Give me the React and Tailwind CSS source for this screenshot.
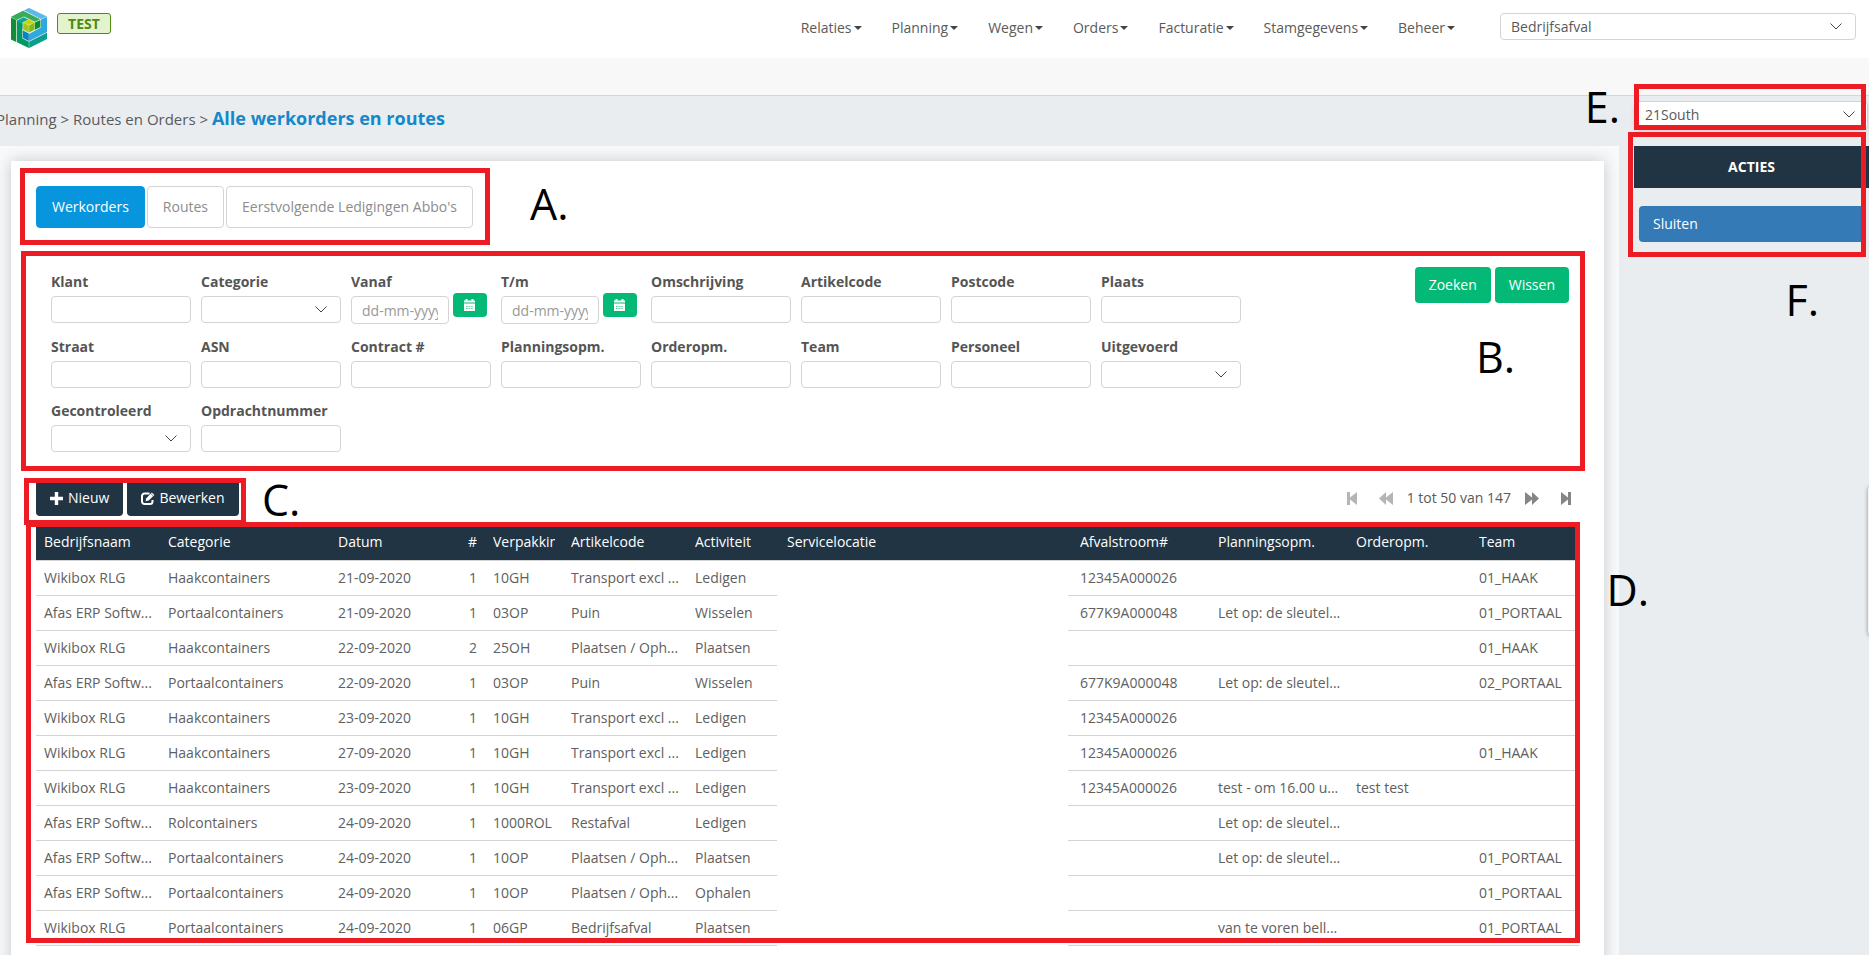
import React, { useState } from 'react';

const navItems = ['Relaties', 'Planning', 'Wegen', 'Orders', 'Facturatie', 'Stamgegevens', 'Beheer'];

const tabs = ['Werkorders', 'Routes', "Eerstvolgende Ledigingen Abbo's"];

const filterFields = [
  { id: 'klant', label: 'Klant' },
  { id: 'categorie', label: 'Categorie', type: 'select' },
  { id: 'vanaf', label: 'Vanaf', type: 'date' },
  { id: 'tm', label: 'T/m', type: 'date' },
  { id: 'omschrijving', label: 'Omschrijving' },
  { id: 'artikelcode', label: 'Artikelcode' },
  { id: 'postcode', label: 'Postcode' },
  { id: 'plaats', label: 'Plaats' },
  { id: 'straat', label: 'Straat' },
  { id: 'asn', label: 'ASN' },
  { id: 'contract', label: 'Contract #' },
  { id: 'planningsopm', label: 'Planningsopm.' },
  { id: 'orderopm', label: 'Orderopm.' },
  { id: 'team', label: 'Team' },
  { id: 'personeel', label: 'Personeel' },
  { id: 'uitgevoerd', label: 'Uitgevoerd', type: 'select' },
  { id: 'gecontroleerd', label: 'Gecontroleerd', type: 'select' },
  { id: 'opdrachtnummer', label: 'Opdrachtnummer' }
];

const columns = [
  { label: 'Bedrijfsnaam', width: 'w-[124px]', cell: 'px-2' },
  { label: 'Categorie', width: 'w-[170px]', cell: 'px-2' },
  { label: 'Datum', width: 'w-[120px]', cell: 'px-2' },
  { label: '#', width: 'w-[35px]', cell: 'px-2 text-right' },
  { label: 'Verpakking', width: 'w-[78px]', cell: 'px-2' },
  { label: 'Artikelcode', width: 'w-[124px]', cell: 'px-2' },
  { label: 'Activiteit', width: 'w-[90px]', cell: 'px-2' },
  { label: 'Servicelocatie', width: '', cell: 'px-2.5', blank: true },
  { label: 'Afvalstroom#', width: 'w-[142px]', cell: 'pl-3 pr-2' },
  { label: 'Planningsopm.', width: 'w-[138px]', cell: 'px-2' },
  { label: 'Orderopm.', width: 'w-[123px]', cell: 'px-2' },
  { label: 'Team', width: 'w-[108px]', cell: 'px-2' }
];

const rows = [
  ['Wikibox RLG', 'Haakcontainers', '21-09-2020', '1', '10GH', 'Transport excl ...', 'Ledigen', '', '12345A000026', '', '', '01_HAAK'],
  ['Afas ERP Softw...', 'Portaalcontainers', '21-09-2020', '1', '03OP', 'Puin', 'Wisselen', '', '677K9A000048', 'Let op: de sleutel...', '', '01_PORTAAL'],
  ['Wikibox RLG', 'Haakcontainers', '22-09-2020', '2', '25OH', 'Plaatsen / Oph...', 'Plaatsen', '', '', '', '', '01_HAAK'],
  ['Afas ERP Softw...', 'Portaalcontainers', '22-09-2020', '1', '03OP', 'Puin', 'Wisselen', '', '677K9A000048', 'Let op: de sleutel...', '', '02_PORTAAL'],
  ['Wikibox RLG', 'Haakcontainers', '23-09-2020', '1', '10GH', 'Transport excl ...', 'Ledigen', '', '12345A000026', '', '', ''],
  ['Wikibox RLG', 'Haakcontainers', '27-09-2020', '1', '10GH', 'Transport excl ...', 'Ledigen', '', '12345A000026', '', '', '01_HAAK'],
  ['Wikibox RLG', 'Haakcontainers', '23-09-2020', '1', '10GH', 'Transport excl ...', 'Ledigen', '', '12345A000026', 'test - om 16.00 u...', 'test test', ''],
  ['Afas ERP Softw...', 'Rolcontainers', '24-09-2020', '1', '1000ROL', 'Restafval', 'Ledigen', '', '', 'Let op: de sleutel...', '', ''],
  ['Afas ERP Softw...', 'Portaalcontainers', '24-09-2020', '1', '10OP', 'Plaatsen / Oph...', 'Plaatsen', '', '', 'Let op: de sleutel...', '', '01_PORTAAL'],
  ['Afas ERP Softw...', 'Portaalcontainers', '24-09-2020', '1', '10OP', 'Plaatsen / Oph...', 'Ophalen', '', '', '', '', '01_PORTAAL'],
  ['Wikibox RLG', 'Portaalcontainers', '24-09-2020', '1', '06GP', 'Bedrijfsafval', 'Plaatsen', '', '', 'van te voren bell...', '', '01_PORTAAL']
];

// Frames and letters that the manual text refers to
const frames = [
  'left-[20px] top-[168px] w-[470px] h-[77px]',
  'left-[21px] right-[284px] top-[251px] h-[220px]',
  'left-[24px] top-[478px] w-[222px] h-[47px]',
  'left-[26px] right-[289px] top-[522px] h-[421px]',
  'right-[3px] top-[84px] w-[232px] h-[46px]',
  'right-[3px] top-[132px] w-[238px] h-[125px]'
];

const letters = [
  { text: 'A.', pos: 'left-[530px] top-[184px]' },
  { text: 'B.', pos: 'right-[354px] top-[337px]' },
  { text: 'C.', pos: 'left-[262px] top-[480px]' },
  { text: 'D.', pos: 'right-[220px] top-[570px]' },
  { text: 'E.', pos: 'right-[249px] top-[87px]' },
  { text: 'F.', pos: 'right-[50px] top-[280px]' }
];

function Logo() {
  return (
    <svg viewBox="0 0 36 40" className="w-9 h-10" aria-hidden="true">
      <polygon points="18,0 36,9 36,31 18,40 0,31 0,9" fill="#d9f0e6" />
      <polygon points="13,2.2 18,0 36,8.5 30,11" fill="#5cb8ea" />
      <polygon points="36,9 36,24 18,33 18,26 30,19.5 30,11.6" fill="#2fa8e0" />
      <polygon points="0,8.8 12,2.8 29.2,11.2 24,13.8 13,8.6 5.4,12" fill="#3aab5b" />
      <polygon points="24,14.4 29.4,11.9 29.4,19 24,21.8" fill="#0c8b2f" />
      <polygon points="0,9.4 5.2,12 5.2,34 0,31.4" fill="#148c37" />
      <polygon points="6,12.4 12.6,9.2 17.4,11.6 11.4,14.6 11.4,20 6,17" fill="#10a596" />
      <polygon points="6,13 11.4,15.4 11.4,30.4 17.8,33.8 17.8,40 6,34.2" fill="#009a62" />
      <polygon points="18.2,33.8 36,24.8 36,31 18.2,40" fill="#0a9f8c" />
      <polygon points="18,11.4 23.4,14.2 18,17 12.4,14.2" fill="#c9d400" />
      <polygon points="12.2,14.6 17.8,17.4 17.8,24.6 12.2,21.6" fill="#a4c712" />
      <polygon points="18.2,17.4 23.6,14.6 23.6,21.6 18.2,24.6" fill="#83b81a" />
      <polygon points="12,22.4 17.8,25.4 17.8,33 12,30" fill="#0b83cc" />
    </svg>
  );
}

function Chevron({ className }) {
  return (
    <svg viewBox="0 0 12 7" className={`pointer-events-none absolute w-3 h-[7px] ${className}`} fill="none" stroke="#444" aria-hidden="true">
      <path d="M0.5 0.5 L6 6 L11.5 0.5" />
    </svg>
  );
}

function PlusIcon() {
  return (
    <svg viewBox="0 0 13 13" className="w-[13px] h-[13px]" fill="currentColor" aria-hidden="true">
      <path d="M4.800 0h3.400v4.800H13v3.400H8.200V13H4.800V8.200H0V4.800h4.800z" />
    </svg>
  );
}

function EditIcon() {
  return (
    <svg viewBox="0 0 14 13" className="w-3.5 h-[13px]" fill="none" aria-hidden="true">
      <path d="M8.5 1.5H3.500A2.500 2.500 0 0 0 1 4v5.500a2.500 2.500 0 0 0 2.500 2.500h5.500a2.500 2.500 0 0 0 2.500-2.500V8" stroke="currentColor" strokeWidth="2" />
      <path d="M4.600 9.200l.7-3L10.800.6l2.600 2.300-5.700 5.600z" fill="currentColor" />
      <path d="M9.800 1.600l2.500 2.300" stroke="#203444" strokeWidth=".6" />
    </svg>
  );
}

function CalendarIcon() {
  return (
    <svg viewBox="0 0 11 12" className="w-[11px] h-3" fill="currentColor" aria-hidden="true">
      <path d="M0 1.500h1.500V0h2v1.500h4V0h2v1.500H11V3.500H0z" />
      <path d="M0 4.500h11V12H0z" />
      <path d="M2 7.500h7M2 9.500h7" stroke="#04b976" strokeWidth=".7" strokeDasharray="1 .6" />
    </svg>
  );
}

function PagerButton({ label, path, className }) {
  return (
    <button aria-label={label} className={`flex w-3.5 justify-center ${className}`}>
      <svg viewBox="0 0 14 13" className="w-3.5 h-[13px]" fill="currentColor" aria-hidden="true">
        <path d={path} />
      </svg>
    </button>
  );
}

function FilterField({ field }) {
  const box = 'h-[27px] rounded border border-[#d4d4d4] bg-white text-sm text-[#555]';

  return (
    <div className="w-[140px]">
      <label htmlFor={field.id} className="block h-5 text-sm leading-5 font-bold text-[#555] whitespace-nowrap">
        {field.label}
      </label>
      {field.type === 'select' && (
        <div className="relative mt-1">
          <select id={field.id} className={`${box} w-full appearance-none px-2`}>
            <option value=""></option>
          </select>
          <Chevron className="right-[14px] top-[10px]" />
        </div>
      )}
      {field.type === 'date' && (
        <div className="mt-1 flex items-start gap-1">
          <input
            id={field.id}
            type="text"
            placeholder="dd-mm-yyyy"
            className="h-7 w-[98px] rounded border border-[#d4d4d4] bg-white px-2.5 text-sm placeholder:text-[#999]"
          />
          <button
            aria-label={`Kies datum ${field.label}`}
            className="-mt-[3px] flex h-6 w-[34px] items-center justify-center rounded bg-[#04b976] pr-0.5 text-white"
          >
            <CalendarIcon />
          </button>
        </div>
      )}
      {!field.type && <input id={field.id} type="text" className={`${box} mt-1 block w-full px-2`} />}
    </div>
  );
}

function WorkOrderTable() {
  return (
    <table className="w-full table-fixed text-sm text-[#606060]">
      <thead>
        <tr className="h-9 border-b border-[#d4d4d4] bg-[#203444] text-white">
          {columns.map(col => (
            <th key={col.label} className={`${col.width} ${col.cell} text-left font-normal`}>
              <div className="overflow-hidden whitespace-nowrap">{col.label}</div>
            </th>
          ))}
        </tr>
      </thead>
      <tbody>
        {rows.map((row, i) => (
          <tr key={i} className="h-[35px]">
            {row.map((value, j) => (
              <td key={j} className={`${columns[j].cell} ${columns[j].blank ? '' : 'border-b border-[#d4d4d4]'}`}>
                <div className="overflow-hidden whitespace-nowrap">{value}</div>
              </td>
            ))}
          </tr>
        ))}
      </tbody>
    </table>
  );
}

export default function App() {
  const [activeTab, setActiveTab] = useState('Werkorders');

  return (
    <div className="relative flex h-screen flex-col overflow-hidden bg-white pb-1 font-['Open_Sans',sans-serif] text-sm text-[#5a5a5a]">
      {/* Header */}
      <header className="flex h-[58px] shrink-0 items-start pl-[11px] pr-[13px]">
        <div className="pt-2">
          <Logo />
        </div>
        <span className="ml-2.5 mt-[13px] flex h-[21px] w-[54px] items-center justify-center rounded-[3px] border border-[#4f8a10] bg-[#e3f3cd] text-sm font-bold text-[#4f8a10]">
          TEST
        </span>
        <nav className="ml-auto flex pt-[18px]">
          {navItems.map(item => (
            <a key={item} href="#" className="flex items-center gap-0.5 px-[15px] leading-5">
              {item}
              <svg viewBox="0 0 8 4" className="w-2 h-1" fill="#444" aria-hidden="true">
                <path d="M0 0h8L4 4z" />
              </svg>
            </a>
          ))}
        </nav>
        <div className="relative ml-[30px] mt-[13px] w-[356px]">
          <select aria-label="Administratie" className="block h-[27px] w-full appearance-none rounded border border-[#d4d4d4] bg-white px-2.5 text-sm">
            <option>Bedrijfsafval</option>
          </select>
          <Chevron className="right-[14px] top-[10px]" />
        </div>
      </header>
      <div className="h-[38px] shrink-0 border-b border-[#d3d6d8] bg-[#f8f8f8]" />

      {/* Breadcrumb */}
      <div className="flex h-[50px] shrink-0 bg-[#e9edf0]">
        <div className="-ml-1 flex-1 pt-2 text-[15px] leading-7 whitespace-nowrap">
          <a href="#">Planning</a> &gt; <a href="#">Routes en Orders</a> &gt;{' '}
          <strong className="text-lg leading-7 font-bold text-[#1588cc]">Alle werkorders en routes</strong>
        </div>
        <div className="relative mt-[5px] w-[235px] pr-px">
          <select aria-label="Locatie" className="block h-7 w-full appearance-none rounded border border-[#d4d4d4] bg-white px-2.5 text-sm shadow-md">
            <option>21South</option>
          </select>
          <Chevron className="right-[14px] top-[10px]" />
        </div>
      </div>

      <div className="flex min-h-0 flex-1">
        <main className="min-w-0 flex-1 overflow-hidden bg-[#f8f9fb] pl-[11px] pr-[15px] pt-[15px]">
          <div className="min-h-full bg-white pb-10 pl-[25px] pr-[25px] pt-[25px] shadow-[0_0_15px_rgba(0,0,0,0.2)]">
            {/* Tabs */}
            <div className="flex gap-0.5">
              {tabs.map(tab => (
                <button
                  key={tab}
                  onClick={() => setActiveTab(tab)}
                  className={`h-[42px] rounded border px-[15px] text-sm whitespace-nowrap ${
                    activeTab === tab
                      ? 'border-[#0796dd] bg-[#0796dd] font-medium text-white'
                      : 'border-[#d4d4d4] bg-white text-[#8c8c8c]'
                  }`}
                >
                  {tab}
                </button>
              ))}
            </div>

            {/* Filters */}
            <form className="mt-[39px] flex items-start justify-between pl-[15px] pr-[10px]" onSubmit={e => e.preventDefault()}>
              <div className="mt-[5px] grid grid-cols-[repeat(8,140px)] gap-x-2.5 gap-y-[13px]">
                {filterFields.map(field => (
                  <FilterField key={field.id} field={field} />
                ))}
              </div>
              <div className="flex gap-1">
                <button type="submit" className="h-9 rounded bg-[#04b976] px-3.5 text-white">Zoeken</button>
                <button type="reset" className="h-9 rounded bg-[#04b976] px-3.5 text-white">Wissen</button>
              </div>
            </form>

            {/* Toolbar */}
            <div className="mt-7 flex items-center justify-between pr-1.5">
              <div className="flex gap-1">
                <button className="flex h-9 items-center gap-[5px] rounded bg-[#203444] px-3.5 text-white">
                  <PlusIcon /> Nieuw
                </button>
                <button className="flex h-9 items-center gap-1 rounded bg-[#203444] px-3.5 text-white">
                  <EditIcon /> Bewerken
                </button>
              </div>
              <div className="flex items-center">
                <PagerButton label="Eerste" path="M2 0h3v5.500L12 0v13L5 7.500V13H2z" className="mr-5 text-[#b5b5b5]" />
                <PagerButton label="Vorige" path="M0 6.500L7 0v5.500L14 0v13L7 7.500V13z" className="mr-3.5 text-[#b5b5b5]" />
                <span>1 tot 50 van 147</span>
                <PagerButton label="Volgende" path="M14 6.500L7 0v5.500L0 0v13l7-5.500V13z" className="ml-3.5 text-[#858585]" />
                <PagerButton label="Laatste" path="M12 0H9v5.500L2 0v13l7-5.500V13h3z" className="ml-5 text-[#858585]" />
              </div>
            </div>

            <div className="mt-2">
              <WorkOrderTable />
            </div>
          </div>
        </main>

        {/* Actions */}
        <aside className="w-[250px] shrink-0 bg-[#e9edf0] pl-[15px]">
          <h2 className="flex h-[42px] items-center justify-center bg-[#203444] text-sm font-bold text-white">ACTIES</h2>
          <div className="mt-[18px] pl-[5px] pr-1">
            <button className="h-9 w-full rounded bg-[#337ab7] px-3.5 text-left text-white">Sluiten</button>
          </div>
        </aside>
      </div>

      <div className="absolute -right-3 top-[486px] h-[149px] w-[13px] rounded bg-[#f4f4f4] shadow-[0_1px_4px_rgba(0,0,0,0.4)]" />

      {/* Annotations */}
      {frames.map(pos => (
        <div key={pos} className={`pointer-events-none absolute border-[5px] border-[#ed1c24] ${pos}`} />
      ))}
      {letters.map(letter => (
        <span key={letter.text} className={`pointer-events-none absolute text-[43px] leading-10 font-[370] text-black ${letter.pos}`}>
          {letter.text}
        </span>
      ))}
    </div>
  );
}
